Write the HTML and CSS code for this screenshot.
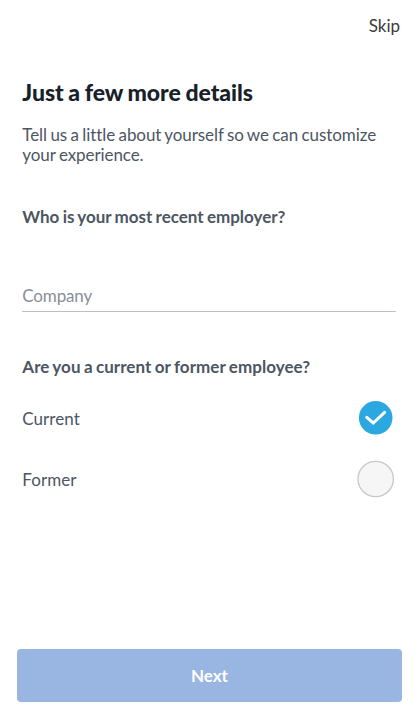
FILE: index.html
```html
<!DOCTYPE html>
<html lang="en">
<head>
	<meta charset="UTF-8">
	<title>Just a few more details</title>
	<link rel="stylesheet" href="styles.css">
</head>
<body>
	<div class="page">
		<div class="topbar">
			<a class="skip">Skip</a>
		</div>
		<h1>Just a few more details</h1>
		<p class="intro">Tell us a little about yourself so we can customize your experience.</p>
		<h2>Who is your most recent employer?</h2>
		<input class="company" type="text" placeholder="Company">
		<h2>Are you a current or former employee?</h2>
		<ul class="options">
			<li>
				<span>Current</span>
				<svg width="38" height="38" viewBox="0 0 38 38">
					<circle cx="18.7" cy="18.8" r="16.8" fill="#2ba8e0"/>
					<path d="M9.8 18.4l6.4 5.6L27.6 13.3" fill="none" stroke="#fff" stroke-width="3" stroke-linecap="round"/>
				</svg>
			</li>
			<li>
				<span>Former</span>
				<svg width="38" height="38" viewBox="0 0 38 38">
					<circle cx="18.7" cy="19" r="17.7" fill="#f6f6f6" stroke="#c6c6cc" stroke-width="1.3"/>
				</svg>
			</li>
		</ul>
		<button class="next">Next</button>
	</div>
</body>
</html>
```

FILE: styles.css
```css
body,
h1,
h2,
p,
ul {
	margin: 0;
	padding: 0;
}
body {
	background: #fff;
	font-family: Lato, sans-serif;
	font-variant-ligatures: none;
	word-spacing: -0.052em;
	color: #4c5662;
}
.page {
	display: flex;
	flex-direction: column;
	box-sizing: border-box;
	height: 720px;
	padding: 16px 22px 18px 22.3px;
}
.topbar {
	display: flex;
	justify-content: flex-end;
	height: 20px;
	margin-right: -4px;
}
.skip {
	font-size: 17px;
	line-height: 20px;
	color: #3c3c3c;
}
h1 {
	margin-top: 41px;
	font-size: 23px;
	line-height: 30px;
	letter-spacing: -0.03px;
	font-weight: 900;
	color: #18212a;
}
.intro {
	margin-top: 18px;
	font-size: 17px;
	line-height: 20px;
	letter-spacing: -0.08px;
}
h2 {
	margin-top: 42px;
	font-size: 17px;
	line-height: 20px;
	letter-spacing: -0.01px;
	font-weight: 700;
}
.company {
	box-sizing: border-box;
	width: 100%;
	height: 33px;
	margin-top: 52px;
	padding: 1px 0 0;
	border: none;
	border-bottom: 1px solid #bdbfc6;
	border-radius: 0;
	background: none;
	font: 17px/20px Lato, sans-serif;
	letter-spacing: -0.15px;
	outline: none;
}
.company::placeholder {
	color: #888e98;
}
.company + h2 {
	margin-top: 45px;
	letter-spacing: 0.05px;
}
.options {
	margin-top: 22px;
	list-style: none;
}
.options li {
	display: flex;
	align-items: center;
	justify-content: space-between;
	height: 38px;
	margin-bottom: 23px;
	padding-right: 1px;
	font-size: 17px;
	line-height: 20px;
}
.options span {
	padding-top: 2px;
	letter-spacing: 0.05px;
}
.next {
	height: 53px;
	margin: auto -6px 0 -5.5px;
	border: none;
	border-radius: 4px;
	background: #99b5e2;
	font: 700 17px/20px Lato, sans-serif;
	color: #fff;
}
```
